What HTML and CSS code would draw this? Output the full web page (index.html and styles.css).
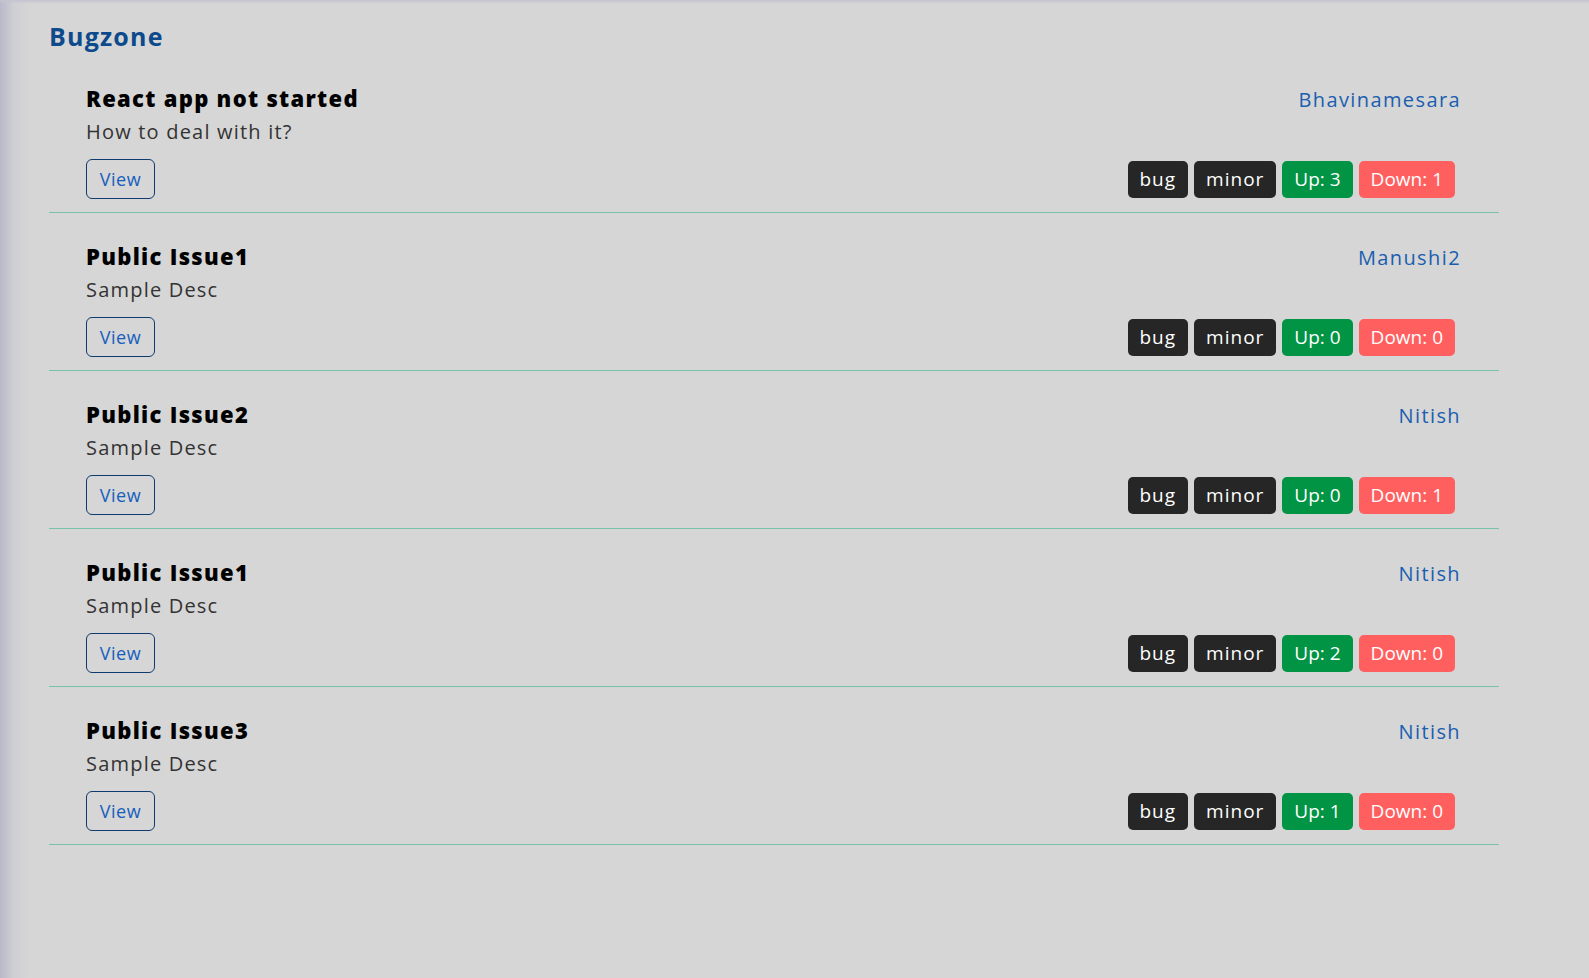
FILE: index.html
```html
<!DOCTYPE html>
<html lang="en">
<head>
<meta charset="utf-8">
<title>Bugzone</title>
<link rel="stylesheet" href="styles.css">
</head>
<body>
<div class="page">
  <h1 class="brand">Bugzone</h1>
  <ul class="issues">
    <li class="issue">
      <div class="issue-top">
        <h2 class="issue-title">React app not started</h2>
        <a class="issue-author">Bhavinamesara</a>
      </div>
      <p class="issue-desc">How to deal with it?</p>
      <div class="issue-actions">
        <button class="btn-view">View</button>
        <div class="badges">
          <span class="badge badge-dark">bug</span>
          <span class="badge badge-dark">minor</span>
          <span class="badge badge-up">Up: 3</span>
          <span class="badge badge-down">Down: 1</span>
        </div>
      </div>
    </li>
    <li class="issue">
      <div class="issue-top">
        <h2 class="issue-title">Public Issue1</h2>
        <a class="issue-author">Manushi2</a>
      </div>
      <p class="issue-desc">Sample Desc</p>
      <div class="issue-actions">
        <button class="btn-view">View</button>
        <div class="badges">
          <span class="badge badge-dark">bug</span>
          <span class="badge badge-dark">minor</span>
          <span class="badge badge-up">Up: 0</span>
          <span class="badge badge-down">Down: 0</span>
        </div>
      </div>
    </li>
    <li class="issue">
      <div class="issue-top">
        <h2 class="issue-title">Public Issue2</h2>
        <a class="issue-author">Nitish</a>
      </div>
      <p class="issue-desc">Sample Desc</p>
      <div class="issue-actions">
        <button class="btn-view">View</button>
        <div class="badges">
          <span class="badge badge-dark">bug</span>
          <span class="badge badge-dark">minor</span>
          <span class="badge badge-up">Up: 0</span>
          <span class="badge badge-down">Down: 1</span>
        </div>
      </div>
    </li>
    <li class="issue">
      <div class="issue-top">
        <h2 class="issue-title">Public Issue1</h2>
        <a class="issue-author">Nitish</a>
      </div>
      <p class="issue-desc">Sample Desc</p>
      <div class="issue-actions">
        <button class="btn-view">View</button>
        <div class="badges">
          <span class="badge badge-dark">bug</span>
          <span class="badge badge-dark">minor</span>
          <span class="badge badge-up">Up: 2</span>
          <span class="badge badge-down">Down: 0</span>
        </div>
      </div>
    </li>
    <li class="issue">
      <div class="issue-top">
        <h2 class="issue-title">Public Issue3</h2>
        <a class="issue-author">Nitish</a>
      </div>
      <p class="issue-desc">Sample Desc</p>
      <div class="issue-actions">
        <button class="btn-view">View</button>
        <div class="badges">
          <span class="badge badge-dark">bug</span>
          <span class="badge badge-dark">minor</span>
          <span class="badge badge-up">Up: 1</span>
          <span class="badge badge-down">Down: 0</span>
        </div>
      </div>
    </li>
  </ul>
</div>
</body>
</html>
```

FILE: styles.css
```css
html, body {
  margin: 0;
  padding: 0;
  height: 100%;
}
body {
  font-family: "Open Sans", "Noto Sans", sans-serif;
  background-color: #d6d6d6;
  background-image:
    linear-gradient(to bottom, #c4c4d0 0, rgba(214,214,214,0) 4px),
    linear-gradient(to right, #b9b9c9 0, #cfcfd4 14px, #d6d6d6 30px);
  color: #333;
}
.page {
  margin-left: 49px;
  width: 1450px;
  padding-top: 18px;
}
.brand {
  margin: 0;
  font-size: 25px;
  line-height: 36px;
  font-weight: 700;
  letter-spacing: 1.2px;
  color: #0d4a8c;
}
.issues {
  list-style: none;
  margin: 1px 0 0;
  padding: 0;
}
.issue {
  padding: 27px 38px 13px 37px;
  border-bottom: 1px solid #79c2aa;
}
.issue-top {
  display: flex;
  justify-content: space-between;
  align-items: baseline;
}
.issue-title {
  margin: 0;
  font-size: 22px;
  line-height: 33px;
  font-weight: 800;
  letter-spacing: 1.3px;
  color: #000;
}
.issue-author {
  font-size: 20px;
  letter-spacing: 1.4px;
  color: #1a5eb0;
  cursor: pointer;
}
.issue-desc {
  margin: 2px 0 0;
  font-size: 20px;
  line-height: 30px;
  letter-spacing: 1.2px;
  color: #333;
}
.issue-actions {
  margin-top: 12px;
  display: flex;
  justify-content: space-between;
  align-items: center;
}
.btn-view {
  height: 40px;
  width: 69px;
  padding: 0;
  border: 1px solid #0e3a6e;
  border-radius: 6px;
  background: transparent;
  font-family: inherit;
  font-size: 18px;
  letter-spacing: 0.6px;
  color: #1560bd;
}
.badges {
  display: flex;
}
.badge {
  height: 37px;
  padding: 0 12px;
  margin-right: 6px;
  border-radius: 5px;
  display: flex;
  align-items: center;
  font-size: 19px;
  color: #fff;
}
.badge-dark {
  background: #262626;
  letter-spacing: 1px;
}
.badge-up { background: #009444; }
.badge-down { background: #ff5f5f; }
```
